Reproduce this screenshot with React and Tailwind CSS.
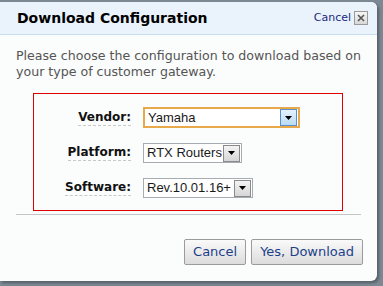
import React from "react";

const verdana = { fontFamily: '"DejaVu Sans", Verdana, sans-serif' };

function Arrow({ focused }) {
  return (
    <span
      className={
        "shrink-0 flex items-center justify-center w-[17px] h-[17px] border " +
        (focused
          ? "border-[#5b8fc7] bg-gradient-to-b from-[#e6f2fc] to-[#b9dbf5]"
          : "border-[#8a8a8a] bg-gradient-to-b from-[#f4f4f4] to-[#d6d6d6]")
      }
    >
      <svg width="7" height="4" viewBox="0 0 7 4">
        <path d="M0 0h7L3.5 4z" fill="#000" />
      </svg>
    </span>
  );
}

function Select({ value, width, focused }) {
  return (
    <div
      className={
        "flex items-center justify-between bg-white pl-[3px] pr-[1px] " +
        (focused ? "h-[21px] border-2 border-[#e8a94a]" : "h-[20px] border border-[#a5acb2]")
      }
      style={{ width }}
    >
      <span className="whitespace-nowrap text-[13px] text-[#1a1a1a] font-['Liberation_Sans',Arial,sans-serif]">{value}</span>
      <Arrow focused={focused} />
    </div>
  );
}

function Row({ label, children }) {
  return (
    <div className="flex items-center">
      <div className="w-[109px] flex justify-end pr-[12px]">
        <span className="font-bold text-[12px] text-[#111] border-b border-dashed border-[#c8c8c8] leading-[15px]">
          {label}
        </span>
      </div>
      {children}
    </div>
  );
}

export default function App() {
  return (
    <div className="w-[383px] h-[286px] bg-[#7c8893] pt-[2px] overflow-hidden" style={verdana}>
      <div className="w-[377px] h-[279px] bg-[#fbfcfc] rounded-r-[6px] shadow-[2px_2px_3px_rgba(0,0,0,0.3)] flex flex-col">
        <div className="h-[33px] bg-[#eaf3fb] border-b border-[#c5dcf0] rounded-tr-[6px] flex items-center justify-between pl-[17px] pr-[9px]">
          <span className="font-bold text-[14px] text-black">Download Configuration</span>
          <div className="flex items-center gap-[3px]">
            <span className="text-[11px] text-[#1a2a80]">Cancel</span>
            <span className="w-[14px] h-[14px] border border-[#9a9a9a] bg-gradient-to-b from-[#f6f6f6] to-[#d8d8d8] flex items-center justify-center">
              <svg width="8" height="8" viewBox="0 0 8 8">
                <path d="M1 1L7 7M7 1L1 7" stroke="#555" strokeWidth="1.6" />
              </svg>
            </span>
          </div>
        </div>
        <p className="px-[16px] pt-[13px] text-[12.6px] leading-[16px] text-[#555]">
          Please choose the configuration to download based on your type of customer gateway.
        </p>
        <div className="ml-[33px] mt-[13px] w-[310px] h-[118px] border border-[#e00000] flex flex-col gap-[15px] pt-[13px]">
          <Row label="Vendor:">
            <Select value="Yamaha" width={157} focused />
          </Row>
          <Row label="Platform:">
            <Select value="RTX Routers" width={99} />
          </Row>
          <Row label="Software:">
            <Select value="Rev.10.01.16+" width={110} />
          </Row>
        </div>
        <div className="mx-[16px] mt-[3px] border-t border-[#c4c4c4]" />
        <div className="flex justify-end gap-[5px] pr-[14px] mt-[24px]">
          <button className="h-[26px] px-[8px] border border-[#9b9b9b] rounded-[2px] bg-gradient-to-b from-[#fafafa] to-[#dcdcdc] text-[13px] text-[#1c3f8a]">
            Cancel
          </button>
          <button className="h-[26px] px-[8px] border border-[#9b9b9b] rounded-[2px] bg-gradient-to-b from-[#fafafa] to-[#dcdcdc] text-[13px] text-[#1c3f8a]">
            Yes, Download
          </button>
        </div>
      </div>
    </div>
  );
}
